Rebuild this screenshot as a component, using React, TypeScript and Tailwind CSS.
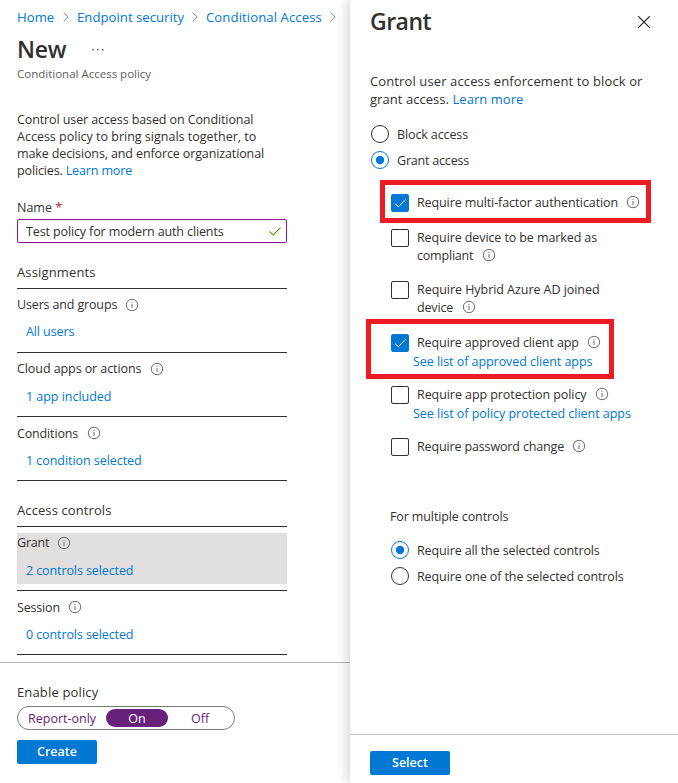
import React from "react";

const base = "block whitespace-nowrap";

function Info({ className = "" }: { className?: string }) {
  return (
    <svg className={`h-3 w-3 shrink-0 overflow-visible ${className}`} viewBox="0 0 12 12" fill="none">
      <circle cx="6" cy="6" r="5.7" stroke="#6e6d6c" strokeWidth="1" />
      <path d="M6 5v4M6 3v1" stroke="#858483" strokeWidth="1.2" />
    </svg>
  );
}

function Chevron() {
  return (
    <svg className="h-[10px] w-[6px] shrink-0" viewBox="0 0 6 10" fill="none">
      <path d="M0.7 0.5L5.2 5L0.7 9.5" stroke="#8a8886" strokeWidth="1" />
    </svg>
  );
}

function Radio({ on = false }: { on?: boolean }) {
  return (
    <svg className="h-[18px] w-[18px] shrink-0" viewBox="0 0 18 18" fill="none">
      <circle cx="9" cy="9" r="8.5" stroke={on ? "#0078d4" : "#323130"} />
      {on && <circle cx="9" cy="9" r="4.2" fill="#0078d4" />}
    </svg>
  );
}

function Check({ on = false }: { on?: boolean }) {
  return (
    <span
      className={`flex h-[18px] w-[18px] shrink-0 items-center justify-center rounded-[2px] border ${
        on ? "border-[#0078d4] bg-[#0078d4]" : "border-[#323130] bg-white"
      }`}
    >
      {on && (
        <svg className="h-[18px] w-[18px] shrink-0" viewBox="0 0 18 18" fill="none">
          <path d="M4 9.5L7.4 12.8L14.5 5.5" stroke="white" strokeWidth="1" />
        </svg>
      )}
    </span>
  );
}

type ItemProps = {
  label: string;
  link: string;
  labelClass: string;
  linkClass: string;
  active?: boolean;
};

function Item({ label, link, labelClass, linkClass, active = false }: ItemProps) {
  return (
    <div className="h-16 w-[270px] border-b border-[#323130] pt-[6px]">
      <div className={`h-[51px] ${active ? "bg-[#e1dfdd]" : ""}`}>
        <div className="flex h-[19px] items-center">
          <span className={`${base} ${labelClass}`}>{label}</span>
          <Info className="ml-[9px] mt-px" />
        </div>
        <div className="mt-[9px] flex h-[19px] items-center pl-[9px] text-[#0078d4]">
          <span className={`${base} ${linkClass}`}>{link}</span>
        </div>
      </div>
    </div>
  );
}

function PolicyPane() {
  return (
    <div className="flex h-full w-[350px] shrink-0 flex-col">
      <div className="flex h-[655px] flex-col pl-[17px]">
        <div className="mt-2 flex h-[18px] shrink-0 items-center text-[13.2px] text-[#0078d4]">
          <span className={`${base} w-[46px]`}>Home</span>
          <Chevron />
          <span className={`${base} ml-2 w-[115px]`}>Endpoint security</span>
          <Chevron />
          <span className={`${base} ml-2 w-[124px] tracking-[0.06px]`}>Conditional Access</span>
          <Chevron />
        </div>
        <div className="mt-[7px] flex h-8 shrink-0 items-center">
          <h1 className={`${base} w-[75px] text-[23px] font-semibold tracking-[-0.3px]`}>New</h1>
          <svg className="mt-px h-[2px] w-3" viewBox="0 0 12 2" fill="#323130">
            <rect x="0.5" width="1.3" height="1.3" />
            <rect x="5.3" width="1.3" height="1.3" />
            <rect x="10.1" width="1.3" height="1.3" />
          </svg>
        </div>
        <p className={`${base} mt-px h-4 shrink-0 text-[11.5px] leading-[16px] text-[#605e5c]`}>
          Conditional Access policy
        </p>
        <div className="mt-[29px] shrink-0 leading-[17px]">
          <span className={`${base} tracking-[-0.1px]`}>Control user access based on Conditional</span>
          <span className={base}>Access policy to bring signals together, to</span>
          <span className={`${base} tracking-[-0.12px]`}>make decisions, and enforce organizational</span>
          <span className={`${base} tracking-[-0.14px]`}>
            policies. <a className="text-[#0078d4]">Learn more</a>
          </span>
        </div>
        <label className={`${base} mt-[21px] h-4 shrink-0 leading-[16px]`}>
          Name <span className="text-[#a4262c]">*</span>
        </label>
        <div className="mt-[3px] flex h-6 w-[270px] shrink-0 items-center justify-between rounded-[2px] border border-[#881798] pl-2 pr-[5px]">
          <span className={`${base} pt-0.5 tracking-[-0.12px]`}>Test policy for modern auth clients</span>
          <svg className="h-[9px] w-3" viewBox="0 0 12 9" fill="none">
            <path d="M0.4 4.3L4.2 8L11.6 0.6" stroke="#57a300" strokeWidth="1.1" />
          </svg>
        </div>
        <h2 className={`${base} mt-[20px] h-[18px] shrink-0 text-[13px] leading-[18px] tracking-[0.14px]`}>Assignments</h2>
        <div className="mt-[7px] h-px w-[270px] shrink-0 bg-[#323130]" />
        <Item label="Users and groups" link="All users" labelClass="w-[100px] tracking-[-0.15px]" linkClass="pb-0.5 tracking-[-0.1px]" />
        <Item label="Cloud apps or actions" link="1 app included" labelClass="w-[125px] tracking-[-0.08px]" linkClass="tracking-[-0.03px]" />
        <Item label="Conditions" link="1 condition selected" labelClass="w-[62px] pt-0.5 tracking-[-0.15px]" linkClass="tracking-[-0.05px]" />
        <h2 className={`${base} mt-[20px] h-[18px] shrink-0 text-[13px] leading-[18px] tracking-[0.1px]`}>Access controls</h2>
        <div className="mt-[7px] h-px w-[270px] shrink-0 bg-[#323130]" />
        <Item label="Grant" link="2 controls selected" labelClass="w-8 tracking-[-0.2px]" linkClass="tracking-[-0.1px]" active />
        <Item label="Session" link="0 controls selected" labelClass="w-[43px] pt-0.5 tracking-[-0.18px]" linkClass="tracking-[-0.1px]" />
      </div>
      <div className="mt-[7px] flex grow flex-col border-t border-[#b3b0ad] pl-[17px] pt-5">
        <span className={`${base} h-[18px] text-[13px] leading-[18px] tracking-[0.15px]`}>Enable policy</span>
        <div className="mt-[5px] flex h-6 w-[218px] shrink-0 items-center rounded-full border border-[#7a7977] px-[2px] text-[#68217a]">
          <span className={`${base} w-[86px] shrink-0 pl-2 pt-px`}>Report-only</span>
          <span className="flex h-[18px] w-[62px] shrink-0 items-center justify-center rounded-full bg-[#68217a] pt-px text-white">On</span>
          <span className="flex w-[67px] justify-center pt-px">Off</span>
        </div>
        <button className="mt-[10px] h-6 w-20 rounded-[2px] bg-[#0078d4] font-semibold text-white">Create</button>
      </div>
    </div>
  );
}

type OptionProps = {
  children: React.ReactNode;
  on?: boolean;
  className?: string;
};

function Option({ children, on = false, className = "" }: OptionProps) {
  return (
    <div className={`flex shrink-0 pl-[41px] ${className}`}>
      <Check on={on} />
      <div className="ml-2 leading-[18px]">{children}</div>
    </div>
  );
}

function GrantPane() {
  return (
    <div className="relative flex h-full w-[328px] flex-col bg-white shadow-[0_0_14px_rgba(0,0,0,0.24)]">
      <div className="flex h-[72px] shrink-0 justify-between pl-5 pr-7 pt-[5px]">
        <h1 className={`${base} text-[23px] leading-8 font-semibold tracking-[-0.5px]`}>Grant</h1>
        <svg className="mt-[11px] h-3 w-3" viewBox="0 0 12 12" fill="none">
          <path d="M0.3 0.3L11.7 11.7M11.7 0.3L0.3 11.7" stroke="#1b1a19" strokeWidth="1.1" />
        </svg>
      </div>
      <div className="h-9 shrink-0 pl-5 text-[13px] leading-[18px]">
        <span className={`${base} tracking-[0.12px]`}>Control user access enforcement to block or</span>
        <span className={`${base} tracking-[0.05px]`}>
          grant access. <a className="text-[#0078d4]">Learn more</a>
        </span>
      </div>
      <div className="mt-[17px] flex h-[18px] shrink-0 items-center gap-2 pl-[21px]">
        <Radio />
        <span className={`${base} pt-0.5 tracking-[-0.12px]`}>Block access</span>
      </div>
      <div className="mt-2 flex h-[18px] shrink-0 items-center gap-2 pl-[21px]">
        <Radio on />
        <span className={`${base} pt-0.5 tracking-[-0.2px]`}>Grant access</span>
      </div>
      <Option on className="mt-[25px] h-[35px]">
        <div className="flex items-center">
          <span className={`${base} w-[201px] tracking-[-0.11px]`}>Require multi-factor authentication</span>
          <Info className="mb-0.5 ml-[9px]" />
        </div>
      </Option>
      <Option className="h-[52px]">
        <span className={`${base} tracking-[-0.1px]`}>Require device to be marked as</span>
        <div className="flex items-center">
          <span className={`${base} w-[57px] tracking-[-0.2px]`}>compliant</span>
          <Info className="mb-0.5 ml-[9px]" />
        </div>
      </Option>
      <Option className="h-[53px]">
        <span className={`${base} tracking-[-0.05px]`}>Require Hybrid Azure AD joined</span>
        <div className="flex items-center">
          <span className={`${base} w-[37px] tracking-[-0.15px]`}>device</span>
          <Info className="mb-0.5 ml-[9px]" />
        </div>
      </Option>
      <Option on className="h-[52px]">
        <div className="flex items-center">
          <span className={`${base} w-[162px] tracking-[-0.1px]`}>Require approved client app</span>
          <Info className="mb-0.5 ml-[9px]" />
        </div>
        <a className={`${base} -ml-1 mt-px tracking-[-0.05px] text-[#0078d4]`}>See list of approved client apps</a>
      </Option>
      <Option className="h-[52px]">
        <div className="flex items-center">
          <span className={`${base} w-[170px] tracking-[-0.07px]`}>Require app protection policy</span>
          <Info className="mb-0.5 ml-[9px]" />
        </div>
        <a className={`${base} -ml-1 mt-px tracking-[-0.03px] text-[#0078d4]`}>See list of policy protected client apps</a>
      </Option>
      <Option className="h-[70px]">
        <div className="flex items-center">
          <span className={`${base} w-[147px] tracking-[-0.14px]`}>Require password change</span>
          <Info className="mb-0.5 ml-[9px]" />
        </div>
      </Option>
      <span className={`${base} h-[18px] shrink-0 pl-10 leading-[18px] tracking-[-0.12px]`}>For multiple controls</span>
      <div className="mt-[15px] flex h-[18px] shrink-0 items-center gap-2 pl-[41px]">
        <Radio on />
        <span className={`${base} pt-0.5 tracking-[-0.11px]`}>Require all the selected controls</span>
      </div>
      <div className="mt-2 flex h-[18px] shrink-0 items-center gap-2 pl-[41px]">
        <Radio />
        <span className={`${base} pt-0.5 tracking-[-0.1px]`}>Require one of the selected controls</span>
      </div>
      <div className="mt-auto h-[49px] shrink-0 border-t border-[#c8c6c4] pl-5 pt-4">
        <button className="h-6 w-20 rounded-[2px] bg-[#0078d4] font-semibold text-white">Select</button>
      </div>
      <div className="absolute left-[30px] top-[180px] h-[43px] w-[271px] border-5 border-[#ed1c24]" />
      <div className="absolute left-[16px] top-[319px] h-[60px] w-[248px] border-5 border-[#ed1c24]" />
    </div>
  );
}

export default function App() {
  return (
    <div className="flex h-[783px] w-[678px] overflow-hidden bg-white font-['Open_Sans','Noto_Sans',sans-serif] text-[12.5px] leading-[18px] text-[#323130]">
      <PolicyPane />
      <GrantPane />
    </div>
  );
}
